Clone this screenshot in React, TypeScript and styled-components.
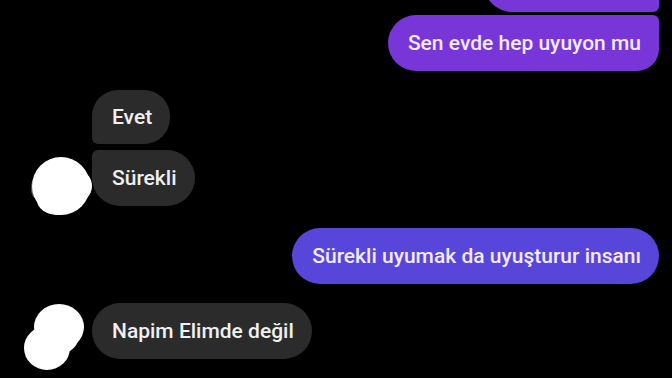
import React from "react";
import styled, { createGlobalStyle } from "styled-components";

const Global = createGlobalStyle`
  html, body { margin: 0; padding: 0; background: #000; }
  body { font-family: Roboto, "Noto Sans", "Liberation Sans", sans-serif; }
`;

const Screen = styled.div`
  width: 672px;
  height: 378px;
  overflow: hidden;
  background: #000;
`;

const Thread = styled.div`
  display: flex;
  flex-direction: column;
  margin-top: -44px;
  padding-right: 13px;
`;

const Row = styled.div<{ $out?: boolean; $gap: number }>`
  display: flex;
  align-items: flex-start;
  justify-content: ${(p) => (p.$out ? "flex-end" : "flex-start")};
  margin-top: ${(p) => p.$gap}px;
`;

const AvatarSlot = styled.div<{ $top: number; $left: number }>`
  width: 92px;
  height: 56px;
  flex: 0 0 92px;
  display: flex;
  align-items: flex-start;
  padding-left: ${(p) => p.$left}px;
  padding-top: ${(p) => p.$top}px;
  box-sizing: border-box;
  overflow: visible;
`;

type Corners = [number, number, number, number];

const Bubble = styled.div<{ $bg: string; $fg: string; $r: Corners; $w?: number; $h?: number }>`
  box-sizing: border-box;
  height: ${(p) => p.$h ?? 56}px;
  display: flex;
  align-items: center;
  padding: 0 18px 1px 20px;
  background: ${(p) => p.$bg};
  color: ${(p) => p.$fg};
  font-size: 21px;
  font-weight: 500;
  white-space: nowrap;
  border-radius: ${(p) => p.$r.map((v) => `${v}px`).join(" ")};
  ${(p) => (p.$w ? `width: ${p.$w}px;` : "")}
`;

const PURPLE = "#7836d9";
const INDIGO = "#5846db";
const DARK = "#2b2b2b";
const LIGHT_ON_PURPLE = "#f3eaff";
const LIGHT_ON_DARK = "#f0f0f0";

const BlobA = () => (
  <svg width="64" height="64" viewBox="0 0 64 64" style={{ marginBottom: -20, overflow: "visible" }}>
    <ellipse cx="4" cy="32" rx="4" ry="10" fill="#555" />
    <circle cx="30" cy="30" r="29" fill="#fff" />
    <circle cx="44" cy="30" r="17" fill="#fff" />
    <ellipse cx="26" cy="44" rx="20" ry="15" fill="#fff" />
  </svg>
);

const BlobB = () => (
  <svg width="62" height="70" viewBox="0 0 62 70" style={{ marginBottom: -20, overflow: "visible" }}>
    <ellipse cx="35" cy="24" rx="25" ry="23" fill="#fff" />
    <ellipse cx="23" cy="45" rx="23" ry="22" fill="#fff" />
    <ellipse cx="30" cy="36" rx="24" ry="16" fill="#fff" />
  </svg>
);

export default function App() {
  return (
    <Screen>
      <Global />
      <Thread>
        <Row $out $gap={0}>
          <Bubble $bg={PURPLE} $fg={LIGHT_ON_PURPLE} $r={[28, 6, 6, 28]} $w={175}>
            &nbsp;
          </Bubble>
        </Row>
        <Row $out $gap={3}>
          <Bubble $bg={PURPLE} $fg={LIGHT_ON_PURPLE} $r={[28, 6, 22, 28]}>
            Sen evde hep uyuyon mu
          </Bubble>
        </Row>
        <Row $gap={19}>
          <AvatarSlot $top={0} $left={0} />
          <Bubble $bg={DARK} $fg={LIGHT_ON_DARK} $r={[26, 26, 26, 6]} $h={54}>
            Evet
          </Bubble>
        </Row>
        <Row $gap={4}>
          <AvatarSlot $top={6} $left={31}>
            <BlobA />
          </AvatarSlot>
          <Bubble $bg={DARK} $fg={LIGHT_ON_DARK} $r={[6, 28, 28, 28]}>
            Sürekli
          </Bubble>
        </Row>
        <Row $out $gap={22}>
          <Bubble $bg={INDIGO} $fg={LIGHT_ON_PURPLE} $r={[28, 28, 28, 28]}>
            Sürekli uyumak da uyuşturur insanı
          </Bubble>
        </Row>
        <Row $gap={19}>
          <AvatarSlot $top={0} $left={24}>
            <BlobB />
          </AvatarSlot>
          <Bubble $bg={DARK} $fg={LIGHT_ON_DARK} $r={[28, 28, 28, 28]}>
            Napim Elimde değil
          </Bubble>
        </Row>
      </Thread>
    </Screen>
  );
}
